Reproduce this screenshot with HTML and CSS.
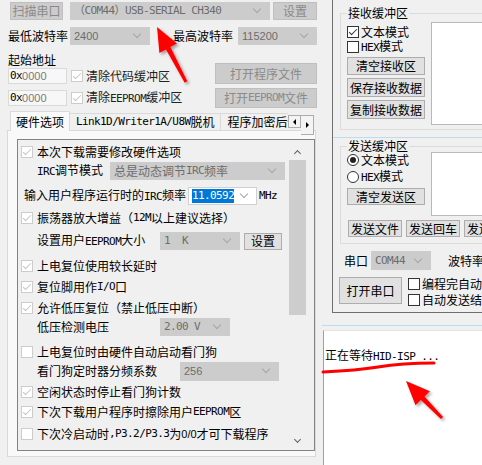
FILE: index.html
```html
<!DOCTYPE html>
<html>
<head>
<meta charset="utf-8">
<link rel="stylesheet" href="styles.css">
</head>
<body>
<div class="app">
  <div class="left">
    <div class="row1">
      <div class="btn dis scan">扫描串口</div>
      <div class="combo dis portcombo"><span class="m">（COM44）USB-SERIAL CH340</span></div>
      <div class="btn dis setbtn">设置</div>
    </div>
    <div class="row2">
      <span class="lab1">最低波特率</span>
      <div class="combo dis baud1"><span class="n">2400</span></div>
      <span class="lab2">最高波特率</span>
      <div class="combo dis baud2"><span class="n">115200</span></div>
    </div>
    <div class="fileblock">
      <div class="fcol">
        <div class="addr-label">起始地址</div>
        <div class="addr-row">
          <div class="hexin"><span class="m">0x</span><span class="n grey">0000</span></div>
          <span class="cb dis on"></span><span class="cblab">清除代码缓冲区</span>
        </div>
        <div class="addr-row second">
          <div class="hexin"><span class="m">0x</span><span class="n grey">0000</span></div>
          <span class="cb dis on"></span><span class="cblab">清除<span class="m">EEPROM</span>缓冲区</span>
        </div>
      </div>
      <div class="bcol">
        <div class="btn dis ob1">打开程序文件</div>
        <div class="btn dis ob2">打开<span class="m">EEPROM</span>文件</div>
      </div>
    </div>
    <div class="tabstrip">
      <div class="tabs">
        <div class="tab sel">硬件选项</div>
        <div class="tab"><span class="m">Link1D/Writer1A/U8W</span>脱机</div>
        <div class="tab">程序加密后传输</div>
      </div>
      <div class="tabarrows">
        <div class="arr l"></div>
        <div class="arr r"></div>
      </div>
    </div>
    <div class="tabpanel">
      <div class="group">
        <div class="gcontent">
          <div class="r r1"><span class="cb dis on"></span>本次下载需要修改硬件选项</div>
          <div class="r r2 ind"><span class="irc-lab"><span class="m">IRC</span>调节模式</span><div class="combo dis irc-combo">总是动态调节<span class="m">IRC</span>频率</div></div>
          <div class="r r3"><span class="freq-lab">输入用户程序运行时的<span class="m">IRC</span>频率</span><div class="combo freq-combo"><span class="m seltext">11.0592</span></div><span class="m mhz">MHz</span></div>
          <div class="r r4"><span class="cb dis on"></span>振荡器放大增益（<span class="m">12M</span>以上建议选择）</div>
          <div class="r r5 ind"><span class="ee-lab">设置用户<span class="m">EEPROM</span>大小</span><div class="combo dis ee-combo"><span class="m">1&nbsp;&nbsp;K</span></div><div class="btn ee-btn">设置</div></div>
          <div class="r r6"><span class="cb dis on"></span>上电复位使用较长延时</div>
          <div class="r r7"><span class="cb dis on"></span>复位脚用作<span class="m">I/O</span>口</div>
          <div class="r r8"><span class="cb dis on"></span>允许低压复位（禁止低压中断）</div>
          <div class="r r9 ind"><span class="ee-lab">低压检测电压</span><div class="combo dis lv-combo"><span class="m">2.00 V</span></div></div>
          <div class="r r10"><span class="cb dis"></span>上电复位时由硬件自动启动看门狗</div>
          <div class="r r11 ind"><span class="wd-lab">看门狗定时器分频系数</span><div class="combo dis wd-combo"><span class="n">256</span></div></div>
          <div class="r r12"><span class="cb dis on"></span>空闲状态时停止看门狗计数</div>
          <div class="r r13"><span class="cb dis on"></span>下次下载用户程序时擦除用户<span class="m">EEPROM</span>区</div>
          <div class="r r14"><span class="cb dis"></span>下次冷启动时<span class="m">,P3.2/P3.3</span>为<span class="n">0/0</span>才可下载程序</div>
        </div>
        <div class="vscroll">
          <div class="sb-up"></div>
          <div class="sb-thumb"></div>
          <div class="sb-track"></div>
          <div class="sb-down"></div>
        </div>
      </div>
    </div>
  </div>

  <div class="right">
    <div class="rpanel">
      <div class="gbox gbox1">
        <div class="glabel">接收缓冲区</div>
        <div class="gbody g1body">
          <div class="lcol">
            <div class="crow c1"><span class="cb on"></span><span class="clab">文本模式</span></div>
            <div class="crow c2"><span class="cb"></span><span class="clab"><span class="m">HEX</span>模式</span></div>
            <div class="btn rb1">清空接收区</div>
            <div class="btn rb2">保存接收数据</div>
            <div class="btn rb2">复制接收数据</div>
          </div>
          <div class="ta ta1"></div>
        </div>
      </div>
      <div class="bline"></div>
      <div class="gbox gbox2">
        <div class="glabel">发送缓冲区</div>
        <div class="gbody g2body">
          <div class="lcol">
            <div class="crow d1"><span class="rb on"></span><span class="clab">文本模式</span></div>
            <div class="crow d2"><span class="rb"></span><span class="clab"><span class="m">HEX</span>模式</span></div>
            <div class="btn rb3">清空发送区</div>
          </div>
          <div class="ta ta2"></div>
        </div>
        <div class="sendrow">
          <div class="btn sb">发送文件</div>
          <div class="btn sb">发送回车</div>
          <div class="btn sb">发送数据</div>
        </div>
      </div>
      <div class="portrow">
        <span class="plab">串口</span>
        <div class="combo dis pcombo"><span class="m">COM44</span></div>
        <span class="blab">波特率</span>
      </div>
      <div class="openrow">
        <div class="btn openbtn">打开串口</div>
        <div class="ocol">
          <div class="crow o1"><span class="cb"></span><span class="clab">编程完自动打开串口</span></div>
          <div class="crow o2"><span class="cb"></span><span class="clab">自动发送结束命令</span></div>
        </div>
      </div>
    </div>
    <div class="rgap"></div>
    <div class="bline2"></div>
    <div class="rgap2"></div>
    <div class="log">正在等待<span class="m">HID-ISP ...</span></div>
  </div>
</div>

<svg class="annot" width="482" height="465" viewBox="0 0 482 465">
  <defs>
    <filter id="sh" x="-30%" y="-30%" width="160%" height="160%">
      <feDropShadow dx="2" dy="2" stdDeviation="1.6" flood-color="#000" flood-opacity="0.35"/>
    </filter>
  </defs>
  <g fill="#f00" filter="url(#sh)">
    <polygon points="157,27 177,43.5 170.4,47 187.3,81.3 184.7,82.7 166,49.4 159.4,52.9"/>
    <polygon points="406,381 429.9,391.2 424.5,396.5 443.1,417 440.9,419 420.9,399.9 415.5,405.2"/>
  </g>
  <path d="M323 372 C 345 371, 360 370, 378 367 S 415 363, 434 363" fill="none" stroke="#f00" stroke-width="3" stroke-linecap="round"/>
</svg>
</body>
</html>
```

FILE: styles.css
```css
* { box-sizing: border-box; }
html, body { margin: 0; padding: 0; }
body {
  width: 482px;
  height: 465px;
  overflow: hidden;
  background: #f0f0f0;
  font-family: "Noto Sans CJK SC", "Noto Sans CJK JP", sans-serif;
  font-size: 12px;
  line-height: 14px;
  color: #000;
  position: relative;
}
.m {
  font-family: "DejaVu Sans Mono", "Noto Sans CJK SC", monospace;
  font-size: 11px;
  letter-spacing: -0.6px;
}
.n { font-family: "Liberation Sans", sans-serif; font-size: 11px; }
.grey { color: #7a7a7a; }

.app { display: grid; grid-template-columns: 322px 160px; height: 465px; }
.left { min-width: 0; }

/* generic controls */
.btn {
  display: flex; align-items: center; justify-content: center;
  border: 1px solid #adadad; background: #e1e1e1;
  white-space: nowrap; flex: none;
}
.btn.dis { background: #cccccc; border-color: #bfbfbf; color: #8a8a8a; }
.combo {
  display: flex; align-items: center; padding-left: 3px;
  border: 1px solid #d0d0d0; background: #fff;
  white-space: nowrap; overflow: hidden; flex: none;
}
.combo::after {
  content: ""; flex: none;
  width: 5px; height: 5px;
  border-right: 1px solid #a6a6a6; border-bottom: 1px solid #a6a6a6;
  transform: rotate(45deg);
  margin-left: auto; margin-right: 9px; margin-top: -4px;
}
.combo.dis { background: #cccccc; border-color: #cccccc; color: #6d6d6d; }
.cb {
  width: 12px; height: 12px; flex: none;
  border: 1px solid #333; background: #fff;
  display: flex; align-items: center; justify-content: center;
}
.cb.dis { border-color: #cccccc; }
.cb.on::after {
  content: ""; width: 3px; height: 7px;
  border-right: 1px solid #333; border-bottom: 1px solid #333;
  transform: rotate(45deg); margin-top: -2px;
}
.cb.dis.on::after { border-color: #c4c4c4; }
.rb {
  width: 12px; height: 12px; flex: none; border-radius: 50%;
  border: 1px solid #333; background: #fff;
  display: flex; align-items: center; justify-content: center;
}
.rb.on::after { content: ""; width: 6px; height: 6px; border-radius: 50%; background: #222; }

/* top rows */
.row1 { display: flex; height: 18px; margin-top: 2px; padding-left: 10px; }
.scan { width: 53px; }
.portcombo { width: 200px; margin-left: 7px; color: #7a7a7a; }
.setbtn { width: 44px; margin-left: 3px; }

.row2 { display: flex; align-items: center; height: 18px; margin-top: 7px; padding-left: 8px; }
.lab1 { width: 62px; }
.baud1 { width: 80px; height: 18px; }
.lab2 { width: 65px; margin-left: 23px; }
.baud2 { width: 79px; height: 18px; }

.fileblock { display: flex; margin-top: 8px; padding-left: 8px; }
.fcol { width: 207px; }
.addr-label { height: 14px; }
.addr-row { display: flex; align-items: center; height: 16px; margin-top: 1px; }
.addr-row.second { margin-top: 6px; }
.hexin {
  width: 59px; height: 16px; flex: none;
  border: 1px solid #d9d9d9; background: #f7f7f7;
  display: flex; align-items: center; padding-left: 1px;
}
.addr-row .cb { margin-left: 4px; }
.cblab { margin-left: 3px; white-space: nowrap; color: #222; }
.bcol { display: flex; flex-direction: column; width: 102px; }
.ob1 { margin-top: 10px; height: 21px; }
.ob2 { margin-top: 4px; height: 20px; }

/* tabs */
.tabstrip { display: flex; height: 20px; margin-top: 3px; padding-left: 10px; position: relative; z-index: 1; }
.tabs { display: flex; align-items: flex-end; width: 278px; overflow: hidden; }
.tab {
  height: 17px; margin-bottom: 1px;
  border: 1px solid #d9d9d9; border-bottom: none; border-left: none;
  display: flex; align-items: center; padding: 0 6px;
  white-space: nowrap; flex: none; background: #f0f0f0;
}
.tab.sel {
  width: 60px; height: 20px; margin-bottom: 0;
  border-left: 1px solid #d9d9d9; background: #f9f9f9;
  justify-content: center; padding: 0;
}
.tabarrows { display: flex; margin-top: 4px; height: 13px; }
.arr {
  width: 13px; height: 13px; border: 1px solid #adadad; background: #f4f4f4;
  display: flex; align-items: center; justify-content: center;
}
.arr + .arr { border-left: none; }
.arr.l::before { content: ""; border-right: 3px solid #000; border-top: 3px solid transparent; border-bottom: 3px solid transparent; }
.arr.r::before { content: ""; border-left: 3px solid #000; border-top: 3px solid transparent; border-bottom: 3px solid transparent; }

.tabpanel {
  margin-left: 7px; margin-top: -1px;
  width: 309px; height: 327px;
  border: 1px solid #d9d9d9; background: #f9f9f9;
  padding: 8px 0 0 9px;
}
.group { width: 298px; height: 312px; border: 1px solid #828282; background: #f0f0f0; display: flex; }
.gcontent { flex: 1; min-width: 0; padding-left: 3px; overflow: hidden; }
.vscroll { width: 17px; margin-right: 8px; display: flex; flex-direction: column; flex: none; }
.sb-up, .sb-down { height: 20px; display: flex; align-items: center; justify-content: center; }
.sb-up::before {
  content: ""; width: 4px; height: 4px;
  border-left: 1.5px solid #606060; border-top: 1.5px solid #606060;
  transform: rotate(45deg); margin-top: 6px;
}
.sb-down::before {
  content: ""; width: 4px; height: 4px;
  border-right: 1.5px solid #606060; border-bottom: 1.5px solid #606060;
  transform: rotate(45deg); margin-top: -2px;
}
.sb-thumb { height: 155px; background: #cdcdcd; }
.sb-track { flex: 1; }

.r { display: flex; align-items: center; height: 20px; white-space: nowrap; }
.r .cb { margin-right: 4px; }
.ind { padding-left: 16px; }
.r1 { margin-top: 2px; }
.r2 { height: 18px; }
.r3 { height: 18px; margin-top: 7px; padding-left: 3px; }
.r4 { margin-top: 3px; }
.r5 { height: 18px; margin-top: 4px; }
.r6 { margin-top: 6px; }
.r7 { margin-top: 1px; }
.r8 { margin-top: 1px; height: 19px; }
.r9 { height: 18px; margin-top: 1px; }
.r10 { margin-top: 6px; }
.r11 { height: 18px; }
.r12 { margin-top: 2px; }
.r13 { margin-top: 0; }
.r14 { margin-top: 2px; }

.irc-lab { width: 73px; flex: none; }
.irc-combo { width: 175px; height: 18px; }
.freq-lab { width: 164px; flex: none; }
.freq-combo { width: 69px; height: 18px; }
.seltext { background: #0078d7; color: #fff; }
.mhz { margin-left: 2px; }
.ee-lab { width: 123px; flex: none; }
.ee-combo { width: 80px; height: 18px; }
.ee-btn { width: 38px; height: 17px; margin-left: 4px; }
.lv-combo { width: 70px; height: 18px; }
.wd-lab { width: 143px; flex: none; }
.wd-combo { width: 99px; height: 19px; }

/* right side */
.right { min-width: 0; overflow: hidden; display: flex; flex-direction: column; }
.rpanel {
  margin-left: 10px; width: 170px; height: 313px; flex: none;
  border-left: 1px solid #6e6e6e; border-bottom: 1px solid #6e6e6e;
  padding-left: 7px;
}
.gbox { border: 1px solid #dcdcdc; border-right: none; padding-left: 6px; }
.gbox1 { margin-top: 13px; height: 117px; }
.gbox2 { margin-top: 8px; height: 98px; }
.glabel { display: table; margin-top: -8px; background: #f0f0f0; padding: 0 1px; height: 14px; }
.gbody { display: flex; }
.g1body { margin-top: 2px; }
.g2body { margin-top: 0; }
.lcol { width: 78px; flex: none; display: flex; flex-direction: column; }
.crow { display: flex; align-items: center; height: 14px; white-space: nowrap; }
.clab { margin-left: 2px; }
.c1 { margin-top: 3px; }
.c2 { margin-top: 1px; }
.d1 { margin-top: 0; }
.d2 { margin-top: 3px; }
.rb1 { margin-top: 3px; height: 18px; }
.rb2 { margin-top: 3px; height: 19px; }
.rb3 { margin-top: 4px; height: 17px; }
.ta { flex: none; width: 100px; margin-left: 6px; background: #fff; border: 1px solid #b9b9b9; }
.ta1 { height: 103px; }
.ta2 { height: 64px; margin-top: -1px; }
.bline { margin: 7px 0 0 -7px; height: 1px; background: #bcdcf4; }
.sendrow { display: flex; gap: 4px; margin-top: 4px; padding-left: 1px; }
.sb { width: 54px; height: 17px; }
.portrow { display: flex; align-items: center; height: 19px; margin-top: 7px; white-space: nowrap; }
.plab { margin-left: 4px; width: 24px; flex: none; }
.pcombo { width: 60px; height: 19px; margin-left: 3px; color: #222; }
.blab { margin-left: 17px; }
.openrow { display: flex; margin-top: 7px; }
.openbtn { width: 63px; height: 27px; margin-left: -1px; }
.ocol { margin-left: 6px; display: flex; flex-direction: column; }
.o1 { margin-top: 0; }
.o2 { margin-top: 2px; }
.rgap { height: 12px; flex: none; }
.bline2 { height: 1px; background: #bcdcf4; flex: none; }
.rgap2 { height: 4px; flex: none; }
.log {
  flex: 1; margin-left: 1px;
  background: #fff; border-left: 1px solid #a0a0a0; border-top: 1px solid #e3e3e3;
  padding: 17px 0 0 1px; white-space: nowrap;
}

.annot { position: absolute; left: 0; top: 0; pointer-events: none; }
```
